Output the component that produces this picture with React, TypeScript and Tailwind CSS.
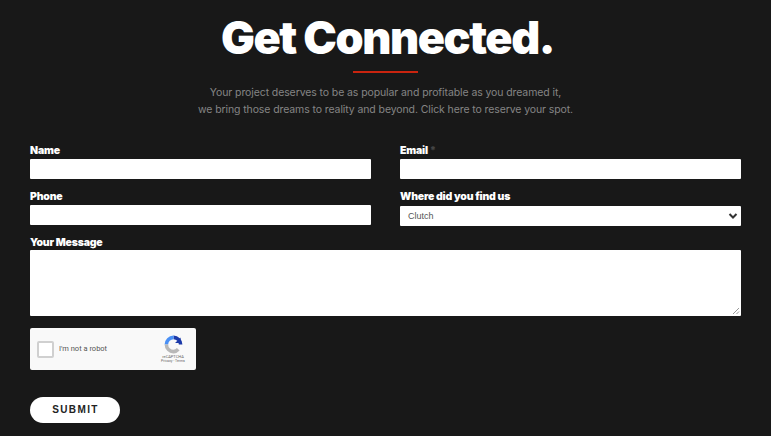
export default function App() {
  const label = "block h-[17px] text-[10.5px] leading-[17px] font-black text-white tracking-[-0.2px] [font-family:Inter,sans-serif]";
  const input = "block w-full h-[20px] bg-white border-0 rounded-[1px]";
  return (
    <div className="w-[771px] h-[436px] overflow-hidden bg-[#181818] px-[30px] pt-[10px] [font-family:Inter,sans-serif]">
      <h1 className="pl-[4px] text-center text-[45px] leading-[56px] font-black text-white tracking-[-1.45px]">Get Connected.</h1>
      <div className="mx-auto mt-[5px] w-[65px] h-[2px] bg-[#c9240f]" />
      <p className="mt-[11px] text-center text-[10.5px] leading-[17px] tracking-[-0.1px] text-[#858585] [font-family:Inter,sans-serif]">
        Your project deserves to be as popular and profitable as you dreamed it,<br />
        we bring those dreams to reality and beyond. Click here to reserve your spot.
      </p>
      <form className="mt-[24px]">
        <div className="grid grid-cols-2 gap-x-[29px] gap-y-[9px]">
          <div>
            <label className={label}>Name</label>
            <input className={input} />
          </div>
          <div>
            <label className={label}>Email <span className="text-[#444]">*</span></label>
            <input className={input} />
          </div>
          <div>
            <label className={label}>Phone</label>
            <input className={input} />
          </div>
          <div>
            <label className={label}>Where did you find us</label>
            <div className="relative mt-[1px] h-[20px] bg-white rounded-[1px] flex items-center pl-[8px] pt-[1px]">
              <span className="text-[9px] text-[#555] [font-family:'Liberation_Sans',sans-serif]">Clutch</span>
              <svg className="absolute right-[3px] top-[6px]" width="10" height="8" viewBox="0 0 10 8" fill="none">
                <path d="M1.5 2 L5 5.5 L8.5 2" stroke="#333" strokeWidth="2" />
              </svg>
            </div>
          </div>
        </div>
        <div className="mt-[8px]">
          <label className="block h-[16px] text-[10.5px] leading-[17px] font-black text-white tracking-[-0.2px] [font-family:Inter,sans-serif]">Your Message</label>
          <div className="relative h-[66px] bg-white rounded-[1px]">
            <svg className="absolute right-[1px] bottom-[1px]" width="8" height="8" viewBox="0 0 8 8" fill="none">
              <path d="M1 7 L7 1 M4.5 7 L7 4.5" stroke="#999" strokeWidth="1" />
            </svg>
          </div>
        </div>
        <div className="mt-[12px] w-[166px] h-[42px] bg-[#f9f9f9] rounded-[2px] flex items-center pl-[7px] pr-[6px]">
          <div className="w-[17px] h-[17px] bg-white border-2 border-[#d0d0d0] rounded-[2px]" />
          <span className="ml-[5px] text-[7.5px] text-[#555] [font-family:Roboto,sans-serif]">I'm not a robot</span>
          <div className="ml-auto flex flex-col items-center w-[34px]">
            <svg width="19" height="19" viewBox="0 0 24 24" fill="none">
              <path d="M12 3 A9 9 0 0 1 21 12" stroke="#1c3aa9" strokeWidth="4.5" />
              <path d="M21 3 V10 H14" fill="#1c3aa9" />
              <path d="M3 12 A9 9 0 0 1 12 3" stroke="#4a90f5" strokeWidth="4.5" />
              <path d="M3 12 A9 9 0 0 0 12 21 A9 9 0 0 0 18 18" stroke="#b8b8b8" strokeWidth="4.5" />
            </svg>
            <span className="text-[4px] leading-[5px] text-[#666] [font-family:Roboto,sans-serif]">reCAPTCHA</span>
            <span className="text-[3.5px] leading-[5px] text-[#666] [font-family:Roboto,sans-serif]">Privacy - Terms</span>
          </div>
        </div>
        <button type="button" className="mt-[27px] block w-[90px] h-[26px] pb-[1px] pl-[1px] rounded-full bg-white text-[#222] text-[10px] font-bold tracking-[1.4px] [font-family:'Liberation_Sans',sans-serif]">SUBMIT</button>
      </form>
    </div>
  );
}
